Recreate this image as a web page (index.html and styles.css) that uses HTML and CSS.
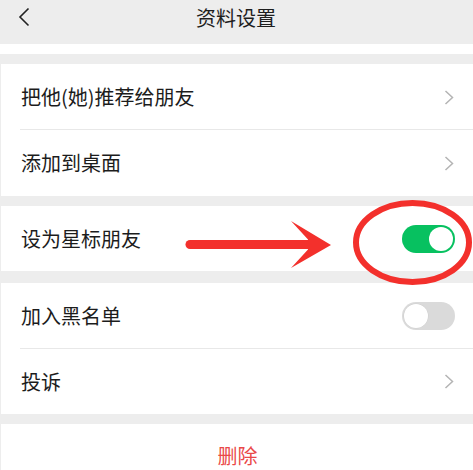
FILE: index.html
```html
<!DOCTYPE html>
<html lang="zh">
<head>
<meta charset="utf-8">
<link rel="stylesheet" href="styles.css">
</head>
<body>
<div class="page">
  <header class="nav">
    <svg class="back" width="12" height="20" viewBox="0 0 12 20"><path d="M10.5 1.5 L2 10 L10.5 18.5" fill="none" stroke="#222" stroke-width="1.6"/></svg>
    <div class="title">资料设置</div>
  </header>
  <div class="strip"></div>
  <div class="gap"></div>
  <section class="card">
    <div class="row divided"><span class="label">把他(她)推荐给朋友</span><svg class="chev" width="10" height="15" viewBox="0 0 10 15"><path d="M1.5 1 L8.5 7.5 L1.5 14" fill="none" stroke="#b4b4b4" stroke-width="1.5"/></svg></div>
    <div class="row tall"><span class="label">添加到桌面</span><svg class="chev" width="10" height="15" viewBox="0 0 10 15"><path d="M1.5 1 L8.5 7.5 L1.5 14" fill="none" stroke="#b4b4b4" stroke-width="1.5"/></svg></div>
  </section>
  <div class="gap"></div>
  <section class="card">
    <div class="row"><span class="label">设为星标朋友</span><span class="toggle on"><span class="knob"></span></span></div>
  </section>
  <div class="gap g12"></div>
  <section class="card">
    <div class="row divided"><span class="label">加入黑名单</span><span class="toggle"><span class="knob"></span></span></div>
    <div class="row"><span class="label">投诉</span><svg class="chev" width="10" height="15" viewBox="0 0 10 15"><path d="M1.5 1 L8.5 7.5 L1.5 14" fill="none" stroke="#b4b4b4" stroke-width="1.5"/></svg></div>
  </section>
  <div class="gap"></div>
  <section class="card del">
    <span class="danger">删除</span>
  </section>
  <svg class="annot" width="473" height="470" viewBox="0 0 473 470">
    <line x1="190" y1="244.5" x2="312" y2="244.5" stroke="#f3302c" stroke-width="9" stroke-linecap="round"/>
    <polygon points="291,221 331,245 291,268 308,249.5 308,239.5" fill="#f3302c"/>
    <ellipse cx="412.5" cy="242.5" rx="56.5" ry="39.5" fill="none" stroke="#f3302c" stroke-width="6"/>
  </svg>
</div>
</body>
</html>
```
FILE: styles.css
```css
html, body {
  margin: 0;
  padding: 0;
}
body {
  background: #ededed;
  font-family: "Noto Sans CJK SC", "Noto Sans", sans-serif;
  color: #1c1c1c;
}
.page {
  position: relative;
  width: 473px;
  height: 470px;
  overflow: hidden;
}
.nav {
  height: 44px;
  background: #ededed;
  display: flex;
  align-items: center;
  justify-content: center;
  position: relative;
}
.back {
  position: absolute;
  left: 18px;
  top: 7px;
}
.title {
  font-size: 20px;
  line-height: 20px;
  margin-top: -8px;
  margin-left: -1px;
  color: #1e1e1e;
}
.strip {
  height: 10px;
  background: #fff;
}
.gap {
  height: 10px;
  background: #ededed;
}
.g12 {
  height: 12px;
}
.card {
  background: #fff;
  margin-left: 1px;
}
.row {
  height: 65px;
  display: flex;
  align-items: center;
  justify-content: space-between;
  padding: 0 18px 0 20px;
  position: relative;
}
.row.tall {
  height: 66px;
}
.row.divided::after {
  content: "";
  position: absolute;
  left: 19px;
  right: 0;
  bottom: 0;
  height: 1px;
  background: #e8e8e8;
}
.row.divided {
  height: 66px;
}
.label {
  font-size: 20px;
  line-height: 24px;
  color: #1c1c1c;
}
.chev {
  display: block;
  margin-right: 1px;
}
.toggle {
  width: 53px;
  height: 28px;
  border-radius: 14px;
  background: #dadada;
  display: flex;
  align-items: center;
  padding: 0 2px;
  box-sizing: border-box;
}
.toggle .knob {
  width: 24px;
  height: 24px;
  border-radius: 50%;
  background: #fff;
  box-shadow: 0 0 0 0.5px #cfcfcf;
}
.toggle.on {
  background: #07c160;
  justify-content: flex-end;
}
.toggle.on .knob {
  box-shadow: none;
}
.del {
  display: flex;
  justify-content: center;
  padding-top: 22px;
  box-sizing: border-box;
  height: 60px;
}
.danger {
  font-size: 20px;
  line-height: 20px;
  color: #ea4848;
  margin-left: 1px;
}
.annot {
  position: absolute;
  left: 0;
  top: 0;
  pointer-events: none;
}
```
